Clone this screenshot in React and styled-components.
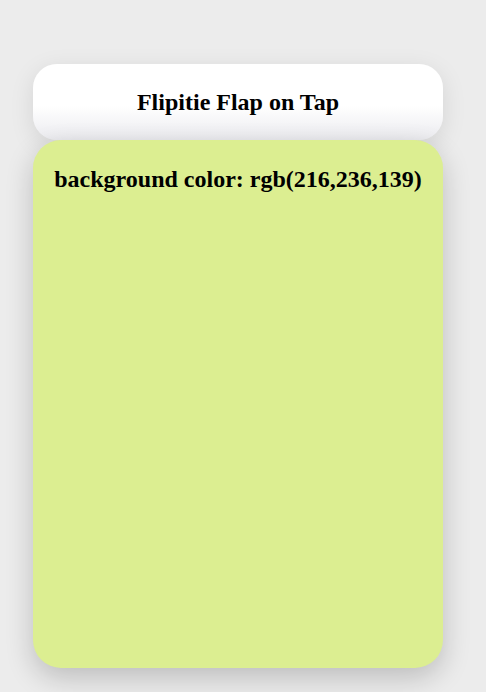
import React from 'react'
import styled, { createGlobalStyle } from 'styled-components'

const GlobalStyle = createGlobalStyle`
  html, body {
    margin: 0;
    padding: 0;
    background: #ececec;
    font-family: "Liberation Serif", "Times New Roman", serif;
  }
`

const Page = styled.div`
  width: 486px;
  height: 692px;
  padding: 64px 43px 0 33px;
  box-sizing: border-box;
  display: flex;
  flex-direction: column;
`

const Header = styled.header`
  height: 76px;
  border-radius: 24px;
  background: linear-gradient(to bottom, #ffffff 0%, #ffffff 55%, #ebebef 100%);
  box-shadow: 0 6px 24px rgba(0, 0, 0, 0.1);
  display: flex;
  align-items: center;
  justify-content: center;
  & h1 {
    margin: 0;
    font-size: 24px;
    font-weight: bold;
    color: #000;
  }
`

const Card = styled.section`
  height: 528px;
  border-radius: 28px;
  background: ${p => p.color};
  box-shadow: 0 10px 28px rgba(0, 0, 0, 0.2);
  padding-top: 26px;
  box-sizing: border-box;
  & h2 {
    margin: 0;
    text-align: center;
    font-size: 24px;
    font-weight: bold;
    color: #000;
  }
`

const App = () => {
  return <Page>
    <GlobalStyle />
    <Header><h1>Flipitie Flap on Tap</h1></Header>
    <Card color='#dcee91'>
      <h2>background color: rgb(216,236,139)</h2>
    </Card>
  </Page>
}

export default App
